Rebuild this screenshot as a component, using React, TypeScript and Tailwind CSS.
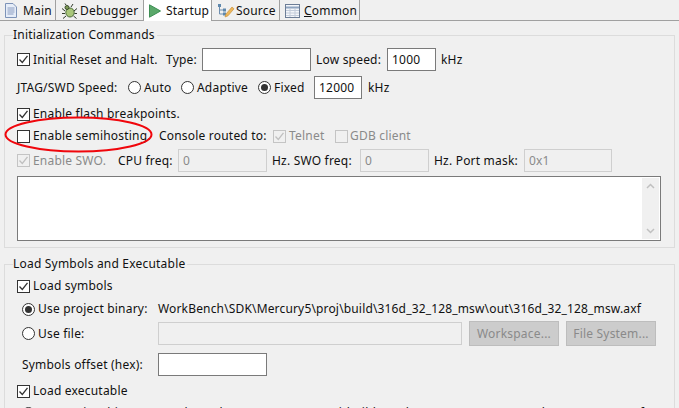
const font = { fontFamily: '"Noto Sans", "Open Sans", sans-serif' };

function Check({ checked, disabled }: { checked?: boolean; disabled?: boolean }) {
  return (
    <span className={`flex h-[13px] w-[13px] shrink-0 items-center justify-center border ${disabled ? "border-[#c4c4c4] bg-[#f0f0f0]" : "border-[#333] bg-white"}`}>
      {checked && (
        <svg width="11" height="11" viewBox="0 0 11 11" fill="none">
          <path d="M1.500 5.500 L4.300 8.500 L9.500 1.800" stroke={disabled ? "#c0c0c0" : "#333"} strokeWidth="1.300" />
        </svg>
      )}
    </span>
  );
}

function Radio({ checked }: { checked?: boolean }) {
  return (
    <span className="flex h-[13px] w-[13px] shrink-0 items-center justify-center rounded-full border border-[#333] bg-white">
      {checked && <span className="h-[7px] w-[7px] rounded-full bg-[#333]" />}
    </span>
  );
}

function Field({ w, value, disabled, h = "h-[23px]" }: { w: string; value?: string; disabled?: boolean; h?: string }) {
  return (
    <span className={`flex shrink-0 items-center border px-[4px] ${w} ${h} ${disabled ? "border-[#cfcfcf] bg-[#f0f0f0] text-[#8a8a8a]" : "border-[#7a7a7a] bg-white text-[#111]"}`}>
      {value}
    </span>
  );
}

function Tab({ icon, label, active, w, gap }: { icon: React.ReactNode; label: React.ReactNode; active?: boolean; w: string; gap: string }) {
  return (
    <div className={`flex shrink-0 items-center border-r border-[#a0a0a0] pl-[5px] pt-[1px] ${w} ${gap} ${active ? "-mb-px h-[21px] bg-white" : "h-[20px] bg-[#f0f0f0]"}`}>
      {icon}
      <span className="text-[#111]">{label}</span>
    </div>
  );
}

const MainIcon = (
  <svg width="12" height="15" viewBox="0 0 12 15" fill="none">
    <path d="M.5.5h7.500l3.500 3.500v10.500H.5z" fill="#e6edf8" stroke="#7d93b8" />
    <path d="M2.500 5h7M2.500 7h7M2.500 9h7M2.500 11h6" stroke="#8a9cc0" />
  </svg>
);
const BugIcon = (
  <svg width="17" height="16" viewBox="0 0 17 16" fill="none">
    <ellipse cx="9" cy="9.500" rx="4.200" ry="4.500" fill="#a9c77a" stroke="#4c6b3a" />
    <circle cx="6" cy="4.500" r="2" fill="#7d9a55" stroke="#3b4c2c" />
    <path d="M4 8 1 5.500M4 10.500H1M5 13l-3 2.500M13 8l3-2.500M13.500 10.500H16M12.500 13l3 2.500M10 4l2-3M5 2 4 .5" stroke="#2f3a2a" />
  </svg>
);
const PlayIcon = (
  <svg width="12" height="14" viewBox="0 0 12 14">
    <path d="M.5.8 11.500 7 .5 13.200z" fill="#5aa86a" stroke="#3f8f55" />
  </svg>
);
const SourceIcon = (
  <svg width="18" height="16" viewBox="0 0 18 16" fill="none">
    <path d="M2.500 3v8h4M2.500 7h4" stroke="#6f8fb0" />
    <rect x="1" y="1" width="3" height="3" fill="#5f88ad" />
    <rect x="6" y="5.500" width="3" height="3" fill="#5f88ad" />
    <rect x="6" y="9.500" width="3" height="3" fill="#5f88ad" />
    <path d="m8 14 1-3 6-7 2 1.800-6 7z" fill="#eeb75a" stroke="#c8923d" strokeWidth=".7" />
  </svg>
);
const CommonIcon = (
  <svg width="15" height="14" viewBox="0 0 15 14" fill="none">
    <rect x=".5" y=".5" width="14" height="13" fill="#f4f6fa" stroke="#6c7d96" />
    <path d="M1 3.500h13" stroke="#8fa4c0" strokeWidth="2" />
    <path d="M5 4v9M10 4v9M1 6.500h13M1 9h13M1 11.500h13" stroke="#c3ccda" />
  </svg>
);

function Group({ title, className, children }: { title: string; className: string; children: React.ReactNode }) {
  return (
    <fieldset className={`mx-[4px] w-[671px] border border-[#dcdcdc] pl-[12px] ${className}`}>
      <legend className="-ml-[4px] px-0 pr-[2px] text-[#111]">{title}</legend>
      {children}
    </fieldset>
  );
}

export default function App() {
  return (
    <div style={font} className="h-[408px] w-[679px] overflow-hidden bg-[#f0f0f0] text-[12px] leading-[16px] tracking-[0.2px] text-[#111]">
      <div className="relative h-full w-full">
        <div className="flex h-[21px] items-start border-b border-[#a0a0a0]">
          <Tab w="w-[56px]" gap="gap-[6px]" icon={MainIcon} label="Main" />
          <Tab w="w-[88px]" gap="gap-[2px]" icon={BugIcon} label="Debugger" />
          <Tab w="w-[68px]" gap="gap-[5px]" icon={PlayIcon} label="Startup" active />
          <Tab w="w-[68px]" gap="gap-[1px]" icon={SourceIcon} label="Source" />
          <Tab w="w-[80px]" gap="gap-[4px]" icon={CommonIcon} label={<><u>C</u>ommon</>} />
        </div>

        <div className="pt-[6px]">
          <Group title="Initialization Commands" className="h-[221px] pt-[5px]">
            <div className="flex h-[23px] items-center">
              <Check checked />
              <span className="ml-[3px] w-[133px]">Initial Reset and Halt.</span>
              <span className="w-[36px]">Type:</span>
              <Field w="w-[109px]" />
              <span className="ml-[5px] w-[71px]">Low speed:</span>
              <Field w="w-[49px]" value="1000" />
              <span className="ml-[5px]">kHz</span>
            </div>
            <div className="mt-[5px] flex h-[23px] items-center">
              <span className="w-[111px]">JTAG/SWD Speed:</span>
              <Radio />
              <span className="ml-[3px] w-[37px]">Auto</span>
              <Radio />
              <span className="ml-[3px] w-[61px]">Adaptive</span>
              <Radio checked />
              <span className="ml-[3px] w-[40px]">Fixed</span>
              <Field w="w-[48px]" value="12000" />
              <span className="ml-[6px]">kHz</span>
            </div>
            <div className="mt-[7px] flex h-[16px] items-center">
              <Check checked />
              <span className="ml-[3px]">Enable flash breakpoints.</span>
            </div>
            <div className="mt-[6px] flex h-[16px] items-center">
              <Check />
              <span className="ml-[3px] w-[126px]">Enable semihosting.</span>
              <span className="w-[114px]">Console routed to:</span>
              <Check checked disabled />
              <span className="ml-[3px] w-[46px] text-[#8a8a8a]">Telnet</span>
              <Check disabled />
              <span className="ml-[2px] text-[#8a8a8a]">GDB client</span>
            </div>
            <div className="mt-[5px] flex h-[23px] items-center">
              <Check checked disabled />
              <span className="ml-[3px] w-[85px] text-[#8a8a8a]">Enable SWO.</span>
              <span className="w-[60px]">CPU freq:</span>
              <Field w="w-[89px]" value="0" disabled />
              <span className="ml-[5px] w-[88px]">Hz. SWO freq:</span>
              <Field w="w-[69px]" value="0" disabled />
              <span className="ml-[5px] w-[90px]">Hz. Port mask:</span>
              <Field w="w-[88px]" value="0x1" disabled />
            </div>
            <div className="mt-[4px] flex h-[65px] w-[644px] justify-end border border-[#7a7a7a] bg-white p-[1px]">
              <div className="flex w-[17px] flex-col items-center justify-between bg-[#f0f0f0] py-[5px]">
                <svg width="9" height="6" viewBox="0 0 9 6" fill="none"><path d="m1 5 3.500-3.500L8 5" stroke="#c0c0c0" strokeWidth="1.500" /></svg>
                <svg width="9" height="6" viewBox="0 0 9 6" fill="none"><path d="m1 1 3.500 3.500L8 1" stroke="#c0c0c0" strokeWidth="1.500" /></svg>
              </div>
            </div>
          </Group>

          <Group title="Load Symbols and Executable" className="mt-[8px] h-[200px] pt-[6px]">
            <div className="flex h-[16px] items-center">
              <Check checked />
              <span className="ml-[3px]">Load symbols</span>
            </div>
            <div className="mt-[7px] flex h-[16px] items-center pl-[5px]">
              <Radio checked />
              <span className="ml-[3px] w-[120px]">Use project binary:</span>
              <span className="tracking-[0.16px]">WorkBench\SDK\Mercury5\proj\build\316d_32_128_msw\out\316d_32_128_msw.axf</span>
            </div>
            <div className="mt-[4px] flex h-[25px] items-center pl-[5px]">
              <Radio />
              <span className="ml-[3px] w-[120px]">Use file:</span>
              <Field w="w-[304px]" disabled />
              <span className="ml-[7px] flex h-[25px] w-[90px] items-center justify-center border border-[#bdbdbd] bg-[#cccccc] text-[#8a8a8a]">Workspace...</span>
              <span className="ml-[7px] flex h-[25px] w-[90px] items-center justify-center border border-[#bdbdbd] bg-[#cccccc] text-[#8a8a8a]">File System...</span>
            </div>
            <div className="mt-[7px] flex h-[23px] items-center pl-[5px]">
              <span className="w-[136px]">Symbols offset (hex):</span>
              <Field w="w-[109px]" />
            </div>
            <div className="mt-[7px] flex h-[16px] items-center">
              <Check checked />
              <span className="ml-[3px]">Load executable</span>
            </div>
            <div className="mt-[6px] flex h-[16px] items-center pl-[5px]">
              <Radio />
              <span className="ml-[3px] w-[123px]">Use project binary:</span>
              <span className="tracking-[0.16px]">WorkBench\SDK\Mercury5\proj\build\316d_32_128_msw\out\316d_32_128_msw.axf</span>
            </div>
          </Group>
        </div>

        <svg className="pointer-events-none absolute left-[4px] top-[116px]" width="150" height="38" viewBox="0 0 150 38" fill="none">
          <ellipse cx="74.500" cy="18.500" rx="73" ry="17" stroke="#f0060c" strokeWidth="2" />
        </svg>
      </div>
    </div>
  );
}
